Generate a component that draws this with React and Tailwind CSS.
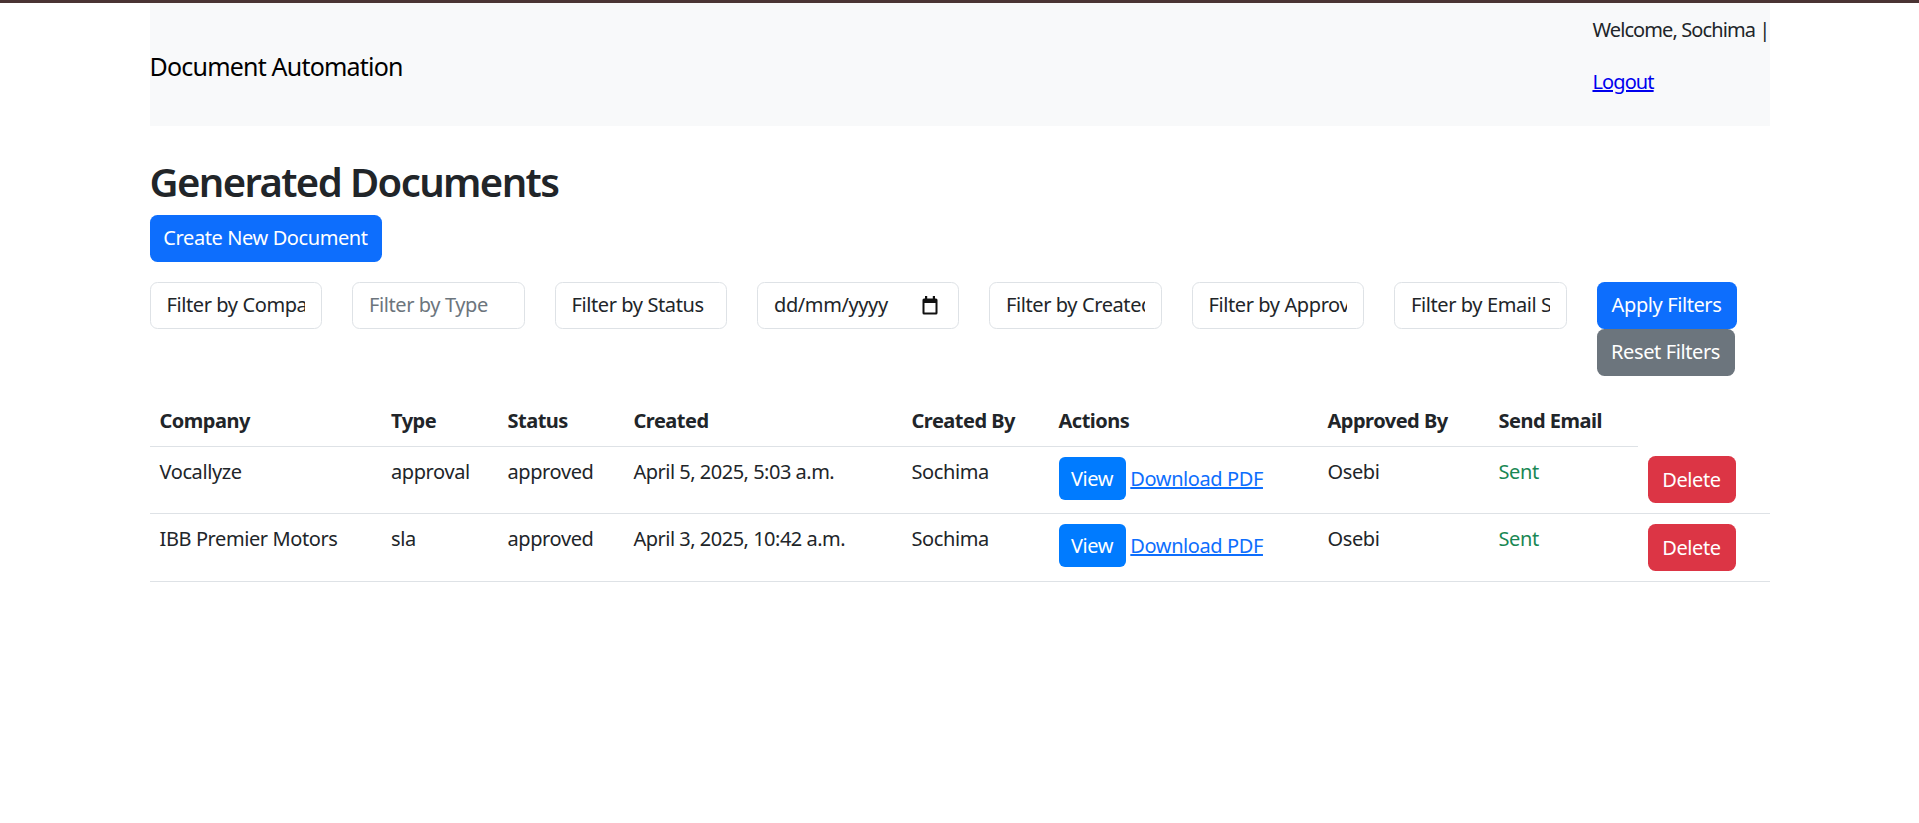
import React from "react";

const rows = [
  { company: "Vocallyze", type: "approval", status: "approved", created: "April 5, 2025, 5:03 a.m.", by: "Sochima", approved: "Osebi", email: "Sent" },
  { company: "IBB Premier Motors", type: "sla", status: "approved", created: "April 3, 2025, 10:42 a.m.", by: "Sochima", approved: "Osebi", email: "Sent" },
];

function SelectBox({ text, w = "w-[172.5px]" }) {
  return (
    <div className={`${w} h-[47px] shrink-0 rounded-[7.5px] border border-[#dee2e6] bg-white px-[16px] flex items-center`}>
      <span className="block w-full overflow-hidden whitespace-nowrap leading-[30px] text-[#212529]">{text}</span>
    </div>
  );
}

function CalendarIcon() {
  return (
    <svg width="16" height="19" viewBox="0 0 16 19" aria-hidden="true">
      <rect x="3" y="0" width="2.2" height="4" fill="#111" />
      <rect x="10.8" y="0" width="2.2" height="4" fill="#111" />
      <rect x="0.5" y="2.5" width="15" height="16" rx="1.5" fill="#111" />
      <rect x="2.5" y="7" width="11" height="9.5" fill="#fff" />
    </svg>
  );
}

export default function App() {
  return (
    <div className="min-h-screen bg-white text-[20px] leading-[30px] text-[#212529] tracking-[-0.4px] font-['Noto_Sans',sans-serif]">
      <div className="h-[3px] bg-[#4a3434]" />
      <div className="mx-auto w-[1620px]">
        <nav className="flex items-center justify-between bg-[#f8f9fa] py-[10px]">
          <div className="pt-[4px] text-[25px] leading-[37.5px] tracking-[-0.8px] text-black">Document Automation</div>
          <div className="flex flex-col items-start pt-[2px] tracking-[-0.9px]">
            <span className="leading-[30px] whitespace-nowrap">Welcome, Sochima |</span>
            <a href="#" className="mt-[22px] mb-[18.5px] leading-[30px] text-[#0000ee] underline">Logout</a>
          </div>
        </nav>

        <h2 className="mt-[32px] mb-[9px] text-[40px] leading-[48px] font-semibold tracking-[-1.6px] text-[#212529]">Generated Documents</h2>
        <button className="w-[232px] h-[47px] rounded-[7.5px] bg-[#0d6efd] text-white leading-[30px] flex items-center justify-center">Create New Document</button>

        <div className="mt-[20px] flex items-start gap-[30px]">
          <SelectBox text="Filter by Company" />
          <div className="w-[172.5px] h-[47px] shrink-0 rounded-[7.5px] border border-[#dee2e6] bg-white px-[16px] flex items-center">
            <span className="block w-full overflow-hidden whitespace-nowrap text-[#6c757d]">Filter by Type</span>
          </div>
          <SelectBox text="Filter by Status" />
          <div className="w-[202px] h-[47px] shrink-0 rounded-[7.5px] border border-[#dee2e6] bg-white pl-[16px] pr-[20px] flex items-center justify-between">
            <span className="whitespace-nowrap">dd/mm/yyyy</span>
            <CalendarIcon />
          </div>
          <SelectBox text="Filter by Created By" />
          <SelectBox text="Filter by Approved By" />
          <SelectBox text="Filter by Email Status" />
          <div className="flex flex-col items-start">
            <button className="w-[140px] h-[47px] rounded-[7.5px] bg-[#0d6efd] text-white flex items-center justify-center">Apply Filters</button>
            <button className="w-[138px] h-[47px] rounded-[7.5px] bg-[#6c757d] text-white flex items-center justify-center">Reset Filters</button>
          </div>
        </div>

        <table className="mt-[20px] w-[1620px] table-fixed border-collapse text-left">
          <colgroup>
            <col className="w-[231.5px]" />
            <col className="w-[116.5px]" />
            <col className="w-[126px]" />
            <col className="w-[278px]" />
            <col className="w-[147px]" />
            <col className="w-[269px]" />
            <col className="w-[171px]" />
            <col className="w-[149px]" />
            <col className="w-[132px]" />
          </colgroup>
          <thead>
            <tr>
              {["Company", "Type", "Status", "Created", "Created By", "Actions", "Approved By", "Send Email"].map((h) => (
                <th key={h} className="p-[10px] font-bold tracking-[-0.5px] border-b border-[#dee2e6] align-top whitespace-nowrap">{h}</th>
              ))}
            </tr>
          </thead>
          <tbody>
            {rows.map((r, i) => (
              <tr key={i}>
                <td className="p-[10px] align-top border-b border-[#dee2e6] whitespace-nowrap">{r.company}</td>
                <td className="p-[10px] align-top border-b border-[#dee2e6]">{r.type}</td>
                <td className="p-[10px] align-top border-b border-[#dee2e6]">{r.status}</td>
                <td className="p-[10px] align-top border-b border-[#dee2e6] whitespace-nowrap tracking-[-0.5px]">{r.created}</td>
                <td className="p-[10px] align-top border-b border-[#dee2e6]">{r.by}</td>
                <td className="p-[10px] align-top border-b border-[#dee2e6] whitespace-nowrap">
                  <span className="inline-block h-[43px] w-[67px] rounded-[6px] bg-[#007bff] text-white text-center leading-[43px] align-baseline">View</span>{" "}
                  <a href="#" className="text-[#0d6efd] underline">Download PDF</a>
                </td>
                <td className="p-[10px] align-top border-b border-[#dee2e6]">{r.approved}</td>
                <td className="p-[10px] align-top border-b border-[#dee2e6] text-[#198754]">{r.email}</td>
                <td className="p-[10px] align-top border-b border-[#dee2e6]">
                  <button className="w-[88px] h-[47px] rounded-[7.5px] bg-[#dc3545] text-white flex items-center justify-center">Delete</button>
                </td>
              </tr>
            ))}
          </tbody>
        </table>
      </div>
    </div>
  );
}
